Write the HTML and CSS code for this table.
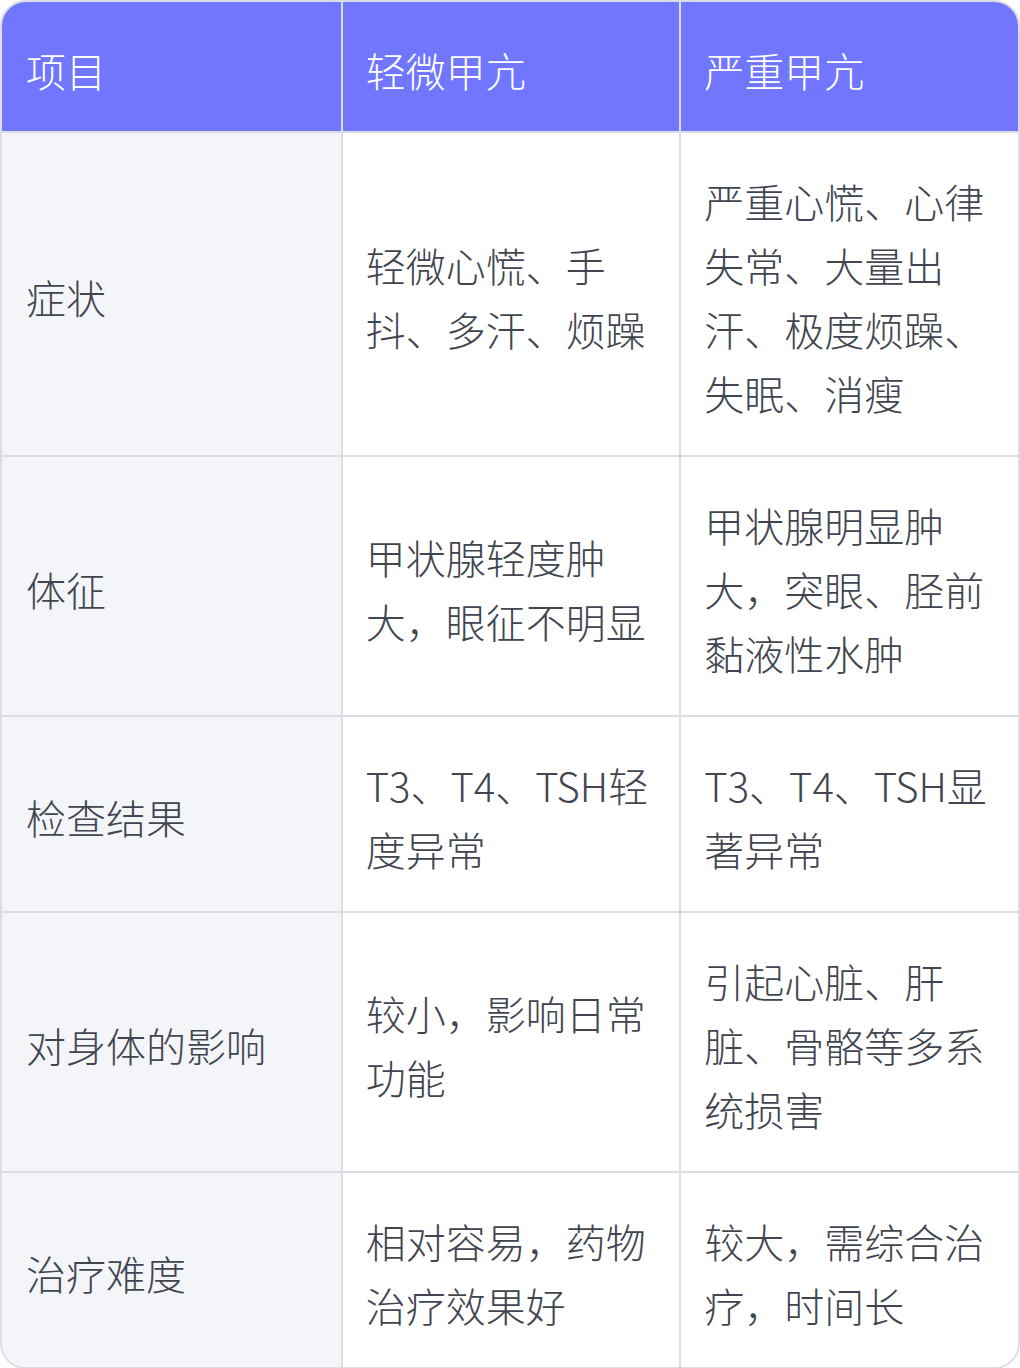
FILE: index.html
```html
<!DOCTYPE html>
<html lang="zh-CN">
<head>
<meta charset="utf-8">
<link rel="stylesheet" href="styles.css">
</head>
<body>
<div class="card">
  <table class="cmp">
    <thead>
      <tr>
        <th>项目</th>
        <th>轻微甲亢</th>
        <th>严重甲亢</th>
      </tr>
    </thead>
    <tbody>
      <tr>
        <td>症状</td>
        <td>轻微心慌、手抖、多汗、烦躁</td>
        <td>严重心慌、心律失常、大量出汗、极度烦躁、失眠、消瘦</td>
      </tr>
      <tr>
        <td>体征</td>
        <td>甲状腺轻度肿大，眼征不明显</td>
        <td>甲状腺明显肿大，突眼、胫前黏液性水肿</td>
      </tr>
      <tr>
        <td>检查结果</td>
        <td>T3、T4、TSH轻度异常</td>
        <td>T3、T4、TSH显著异常</td>
      </tr>
      <tr>
        <td>对身体的影响</td>
        <td>较小，影响日常功能</td>
        <td>引起心脏、肝脏、骨骼等多系统损害</td>
      </tr>
      <tr>
        <td>治疗难度</td>
        <td>相对容易，药物治疗效果好</td>
        <td>较大，需综合治疗，时间长</td>
      </tr>
    </tbody>
  </table>
</div>
</body>
</html>
```

FILE: styles.css
```css
html, body {
  margin: 0;
  padding: 0;
  background: #ffffff;
}
body {
  font-family: "Noto Sans CJK SC", "Noto Sans", sans-serif;
  font-weight: 300;
}
.card {
  width: 1020px;
  box-sizing: border-box;
  border: 2px solid #dcdde3;
  border-radius: 26px;
  overflow: hidden;
}
.cmp {
  width: 100%;
  border-collapse: separate;
  border-spacing: 0;
  table-layout: fixed;
}
.cmp th,
.cmp td {
  padding: 36px 24px 30px 23px;
  font-size: 40px;
  line-height: 64px;
  text-align: left;
  vertical-align: middle;
  font-weight: 300;
  border-left: 2px solid #dcdde3;
}
.cmp th:first-child,
.cmp td:first-child {
  border-left: none;
  padding-left: 24px;
}
.cmp th {
  background: #7076fe;
  color: #ffffff;
  padding-top: 36px;
  padding-bottom: 29px;
}
.cmp td {
  color: #41454f;
  border-top: 2px solid #dcdde3;
  background: #ffffff;
}
.cmp td:first-child {
  background: #f4f5f9;
}
```
